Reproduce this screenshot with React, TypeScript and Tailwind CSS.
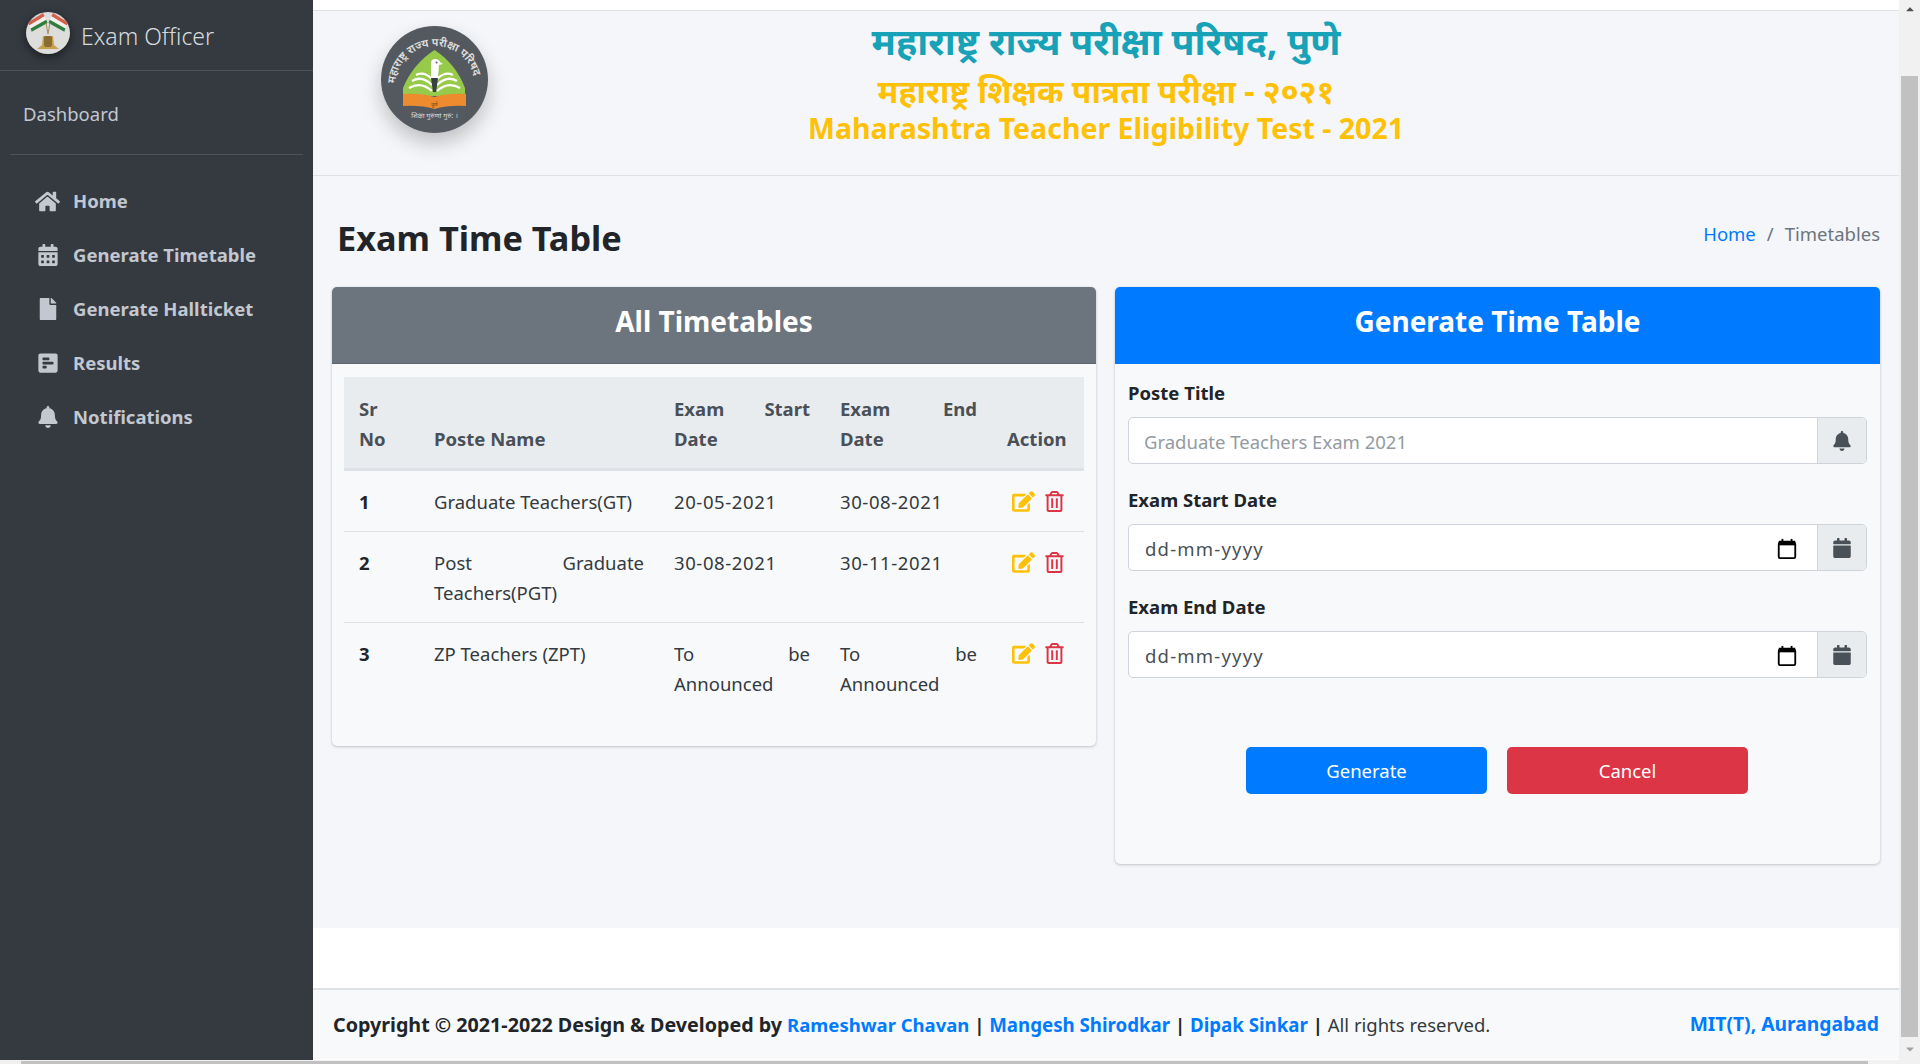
import { FaHome, FaCalendarAlt, FaFile, FaPollH, FaBell, FaCalendar, FaEdit, FaRegTrashAlt, FaCaretUp, FaCaretDown } from 'react-icons/fa';

const font = "font-['Noto_Sans','Open_Sans',sans-serif]";

function BrandLogo() {
  return (
    <svg viewBox="0 0 44 42" className="h-[42px] w-[44px] shrink-0 drop-shadow-[0_3px_5px_rgba(0,0,0,0.5)]">
      <ellipse cx="22" cy="21" rx="22" ry="21" fill="#dddddb" />
      <path d="M2.3 10.3 L17 1 L18.7 4.3 L3.4 13.4 Z" fill="#d4604e" />
      <path d="M3.4 13.4 L18.7 4.3 L20.3 7.7 L4.6 16.6 Z" fill="#f4f1ec" />
      <path d="M4.6 16.6 L20.3 7.7 L21.5 11 L5.7 19.7 Z" fill="#2f7d3f" />
      <path d="M41.7 10.3 L27 1 L25.3 4.3 L40.6 13.4 Z" fill="#d4604e" />
      <path d="M40.6 13.4 L25.3 4.3 L23.7 7.7 L39.4 16.6 Z" fill="#f4f1ec" />
      <path d="M39.4 16.6 L23.7 7.7 L22.5 11 L38.3 19.7 Z" fill="#2f7d3f" />
      <path d="M20 11 L22 22 L24 11" fill="none" stroke="#a98f55" strokeWidth="1" />
      <path d="M17 24 h10 l1 9 l5 4 H11 l5-4 Z" fill="#c7a04e" />
      <rect x="18" y="24" width="8" height="11" rx="2" fill="#8a6c2e" />
    </svg>
  );
}

function SealLogo() {
  return (
    <svg viewBox="0 0 107 107" className="h-[107px] w-[107px]">
      <defs>
        <path id="seal-arc" d="M14 60 A40 40 0 1 1 94 60" />
      </defs>
      <circle cx="53.5" cy="53.5" r="53.5" fill="#54595f" />
      <text fontSize="11" fontWeight="600" fill="#e0e0e0" fontFamily="'Noto Sans Devanagari','Noto Sans',sans-serif">
        <textPath href="#seal-arc" startOffset="2%">महाराष्ट्र राज्य परीक्षा परिषद</textPath>
      </text>
      <path d="M53.5 24 Q75 38 84 62 V70 H22 V62 Q32 38 53.5 24 Z" fill="#97c94a" />
      <path d="M28 62 Q40 55 51 65 M31 55 Q41 49 51 59 M35 49 Q43 45 51 53 M79 62 Q67 55 56 65 M76 55 Q66 49 56 59 M72 49 Q64 45 56 53" fill="none" stroke="#fff" strokeWidth="2.2" />
      <path d="M50 52 V37 Q50 33 54 33 Q58 33 59 36 L62 38 L58 39 L57 52 Z" fill="#fff" />
      <circle cx="55.5" cy="36.5" r="1" fill="#54595f" />
      <path d="M50 52 H57 L55 66 H52 Z" fill="#3a3f44" />
      <path d="M22 68 Q40 67 53.5 71 Q67 67 85 68 V80 Q67 79 53.5 83 Q40 79 22 80 Z" fill="#ee8b2e" />
      <text x="53.5" y="80" textAnchor="middle" fontSize="5" fill="#5b3a12" fontFamily="'Noto Sans Devanagari','Noto Sans',sans-serif">पुणे</text>
      <text x="53.5" y="92" textAnchor="middle" fontSize="7" fill="#dcdcdc" fontFamily="'Noto Sans Devanagari','Noto Sans',sans-serif">शिक्षा गुरुणां गुरु: ।</text>
    </svg>
  );
}

function DateIcon() {
  return (
    <svg viewBox="0 0 20 24" className="h-[22px] w-[20px] shrink-0">
      <rect x="1" y="5" width="18" height="17" rx="1.5" fill="#fff" stroke="#000" strokeWidth="2" />
      <rect x="1" y="3" width="18" height="5" fill="#000" />
      <rect x="4" y="1" width="2" height="3" fill="#000" />
      <rect x="14" y="1" width="2" height="3" fill="#000" />
    </svg>
  );
}

const navItems = [
  { label: 'Home', icon: FaHome, size: 'text-[25px]' },
  { label: 'Generate Timetable', icon: FaCalendarAlt, size: 'text-[22px]' },
  { label: 'Generate Hallticket', icon: FaFile, size: 'text-[22px]' },
  { label: 'Results', icon: FaPollH, size: 'text-[22px]' },
  { label: 'Notifications', icon: FaBell, size: 'text-[22px]' },
];

function Sidebar() {
  return (
    <aside className="w-[313px] shrink-0 bg-[#343a40] text-[#c2c7d0]">
      <div className="flex h-[71px] items-center gap-[11px] border-b border-[#4b545c] pb-[4px] pl-[26px]">
        <BrandLogo />
        <span className="mt-[6px] text-[23px] font-light text-[#d7dade]">Exam Officer</span>
      </div>
      <div className="mx-[10px] flex h-[84px] items-center border-b border-[#4b545c] pl-[13px] pt-[3px] text-[18.5px]">Dashboard</div>
      <nav className="flex flex-col pt-[19px]">
        {navItems.map(item => (
          <a key={item.label} href="#" className="flex h-[54px] items-center pl-[35px]">
            <span className={`flex w-[25px] justify-center ${item.size}`}><item.icon /></span>
            <span className="ml-[13px] text-[18.5px] font-bold">{item.label}</span>
          </a>
        ))}
      </nav>
    </aside>
  );
}

const rows = [
  { no: 1, name: 'Graduate Teachers(GT)', start: '20-05-2021', end: '30-08-2021' },
  { no: 2, name: 'Post Graduate Teachers(PGT)', start: '30-08-2021', end: '30-11-2021' },
  { no: 3, name: 'ZP Teachers (ZPT)', start: 'To be Announced', end: 'To be Announced' },
];

function DateCell({ value }: { value: string }) {
  // numeric dates run a little wider in the original font
  return <td className={`px-[15px] pb-[14px] pt-[16px] ${value[0] === 'T' ? '' : 'tracking-[0.6px]'}`}>{value}</td>;
}

function TimetablesCard() {
  return (
    <section className="h-[459px] w-[764px] rounded-[5px] bg-[#f8f9fa] shadow-[0_0_1px_rgba(0,0,0,0.125),0_1px_3px_rgba(0,0,0,0.2)]">
      <h3 className="flex h-[77px] items-center justify-center rounded-t-[5px] border-b border-[#5d656c] bg-[#6c757d] pb-[9px] text-[28px] font-bold text-white">All Timetables</h3>
      <div className="px-[12px] pt-[13px]">
        <table className="w-[740px] table-fixed border-collapse text-justify text-[18.5px] leading-[30px] text-[#343a40]">
          <colgroup>
            <col className="w-[75px]" />
            <col className="w-[240px]" />
            <col className="w-[166px]" />
            <col className="w-[167px]" />
            <col className="w-[92px]" />
          </colgroup>
          <thead>
            <tr className="border-b-[3px] border-[#dee2e6] bg-[#e9ecef] align-bottom text-[#495057]">
              <th className="px-[15px] pb-[14px] pt-[17px] text-justify font-bold">Sr No</th>
              <th className="px-[15px] pb-[14px] pt-[17px] text-left font-bold">Poste Name</th>
              <th className="px-[15px] pb-[14px] pt-[17px] text-justify font-bold">Exam Start Date</th>
              <th className="px-[15px] pb-[14px] pt-[17px] text-justify font-bold">Exam End Date</th>
              <th className="px-[15px] pb-[14px] pt-[17px] text-left font-bold">Action</th>
            </tr>
          </thead>
          <tbody>
            {rows.map((row, i) => (
              <tr key={row.no} className={`align-top ${i < 2 ? 'border-b border-[#dee2e6]' : ''}`}>
                <td className="px-[15px] pb-[14px] pt-[16px] font-bold text-[#212529]">{row.no}</td>
                <td className="px-[15px] pb-[14px] pt-[16px]">{row.name}</td>
                <DateCell value={row.start} />
                <DateCell value={row.end} />
                <td className="p-[15px]">
                  <div className="flex h-[30px] items-center gap-[9px] pl-[5px]">
                    <FaEdit className="text-[23px] text-[#ffc107]" />
                    <FaRegTrashAlt className="text-[21px] text-[#dc3545]" />
                  </div>
                </td>
              </tr>
            ))}
          </tbody>
        </table>
      </div>
    </section>
  );
}

function Field({ label, children, icon }: { label: string; children: React.ReactNode; icon: React.ReactNode }) {
  return (
    <div className="mb-[21px]">
      <label className="mb-[9px] block text-[18.5px] font-bold leading-[30px] text-[#212529]">{label}</label>
      <div className="flex h-[47px] rounded-[5px] border border-[#ced4da] bg-white">
        <div className="flex min-w-0 flex-1 items-center pl-[15px] pr-[20px] pt-[3px] text-[18.5px] text-[#495057]">{children}</div>
        <div className="flex w-[49px] items-center justify-center rounded-r-[4px] border-l border-[#ced4da] bg-[#e9ecef] text-[20px] text-[#495057]">{icon}</div>
      </div>
    </div>
  );
}

function GenerateCard() {
  return (
    <section className="h-[577px] w-[765px] rounded-[5px] bg-[#f8f9fa] shadow-[0_0_1px_rgba(0,0,0,0.125),0_1px_3px_rgba(0,0,0,0.2)]">
      <h3 className="flex h-[77px] items-center justify-center rounded-t-[5px] bg-[#007bff] pb-[9px] text-[28px] font-bold text-white">Generate Time Table</h3>
      <div className="px-[13px] pt-[14px]">
        <Field label="Poste Title" icon={<FaBell />}>
          <input readOnly placeholder="Graduate Teachers Exam 2021" className="w-full bg-transparent outline-none placeholder:text-[#939ba2]" />
        </Field>
        <Field label="Exam Start Date" icon={<FaCalendar />}>
          <span className="ml-[1px] flex-1 tracking-[1.2px]">dd-mm-yyyy</span>
          <DateIcon />
        </Field>
        <Field label="Exam End Date" icon={<FaCalendar />}>
          <span className="ml-[1px] flex-1 tracking-[1.2px]">dd-mm-yyyy</span>
          <DateIcon />
        </Field>
        <div className="mt-[69px] flex justify-center gap-[20px] pr-[2px] text-[18.5px] text-white">
          <button className="h-[47px] w-[241px] rounded-[5px] bg-[#007bff] pl-[1px] pt-[1px]">Generate</button>
          <button className="h-[47px] w-[241px] rounded-[5px] bg-[#dc3545] pl-[1px] pt-[1px]">Cancel</button>
        </div>
      </div>
    </section>
  );
}

function Main() {
  return (
    <main className="flex min-w-0 flex-1 flex-col bg-white">
      <div className="h-[11px] border-b border-[#dee2e6] bg-white" />
      <div className="h-[917px] bg-[#f4f6f9]">
        <header className="grid h-[165px] grid-cols-[1fr_auto_1fr] border-b border-[#dee2e6]">
          <div className="pl-[68px] pt-[15px]">
            <div className="h-[107px] w-[107px] rounded-full shadow-[0_10px_20px_rgba(0,0,0,0.22)]"><SealLogo /></div>
          </div>
          <div className="pt-[2px] text-center font-bold">
            <div className="text-[37.5px] leading-[56px] text-[#17a2b8]">महाराष्ट्र राज्य परीक्षा परिषद, पुणे</div>
            <div className="text-[32px] leading-[44px] text-[#ffc107]">महाराष्ट्र शिक्षक पात्रता परीक्षा - २०२१</div>
            <div className="text-[28.5px] leading-[31px] text-[#ffc107]">Maharashtra Teacher Eligibility Test - 2021</div>
          </div>
          <div />
        </header>
        <div className="flex h-[111px] items-center justify-between pl-[24px] pr-[19px] pt-[12px]">
          <h1 className="text-[34.3px] font-bold text-[#212529]">Exam Time Table</h1>
          <div className="mt-[2px] flex gap-[11px] pb-[9px] text-[18.5px] text-[#6c757d]">
            <a href="#" className="text-[#007bff]">Home</a>
            <span>/</span>
            <span>Timetables</span>
          </div>
        </div>
        <div className="flex items-start gap-[19px] pl-[19px]">
          <TimetablesCard />
          <GenerateCard />
        </div>
      </div>
      <div className="h-[60px] bg-white" />
      <footer className="flex h-[71px] items-center justify-between border-t-2 border-[#dee2e6] bg-[#f8f9fa] pl-[20px] pr-[20px] text-[18.5px] text-[#212529]">
        <div>
          <b className="text-[19.7px] font-bold">Copyright © 2021-2022 Design &amp; Developed by </b>
          <a href="#" className="text-[18.5px] font-bold text-[#007bff]">Rameshwar Chavan</a>
          <b className="font-bold"> | </b>
          <a href="#" className="text-[18.7px] font-bold text-[#007bff]">Mangesh Shirodkar</a>
          <b className="font-bold"> | </b>
          <a href="#" className="text-[18.7px] font-bold text-[#007bff]">Dipak Sinkar</a>
          <b className="font-bold"> | </b>
          <span className="text-[#343a40]">All rights reserved.</span>
        </div>
        <a href="#" className="text-[19.3px] font-bold text-[#007bff]">MIT(T), Aurangabad</a>
      </footer>
    </main>
  );
}

function VerticalScrollbar() {
  return (
    <div className="flex w-[21px] shrink-0 flex-col items-center justify-between bg-[#f1f1f1] pb-[5px] pt-[3px] text-[12px] text-[#505050]">
      <FaCaretUp />
      <div className="mb-[6px] mt-[61px] w-[17px] flex-1 bg-[#c1c1c1]" />
      <FaCaretDown className="text-[#a3a3a3]" />
    </div>
  );
}

export default function App() {
  return (
    <div className={`flex h-[1064px] w-[1920px] flex-col overflow-hidden bg-[#f1f1f1] ${font}`}>
      <div className="flex h-[1060px]">
        <Sidebar />
        <Main />
        <VerticalScrollbar />
      </div>
      <div className="ml-[21px] mt-[1px] h-[3px] w-[1847px] bg-[#c1c1c1]" />
    </div>
  );
}
